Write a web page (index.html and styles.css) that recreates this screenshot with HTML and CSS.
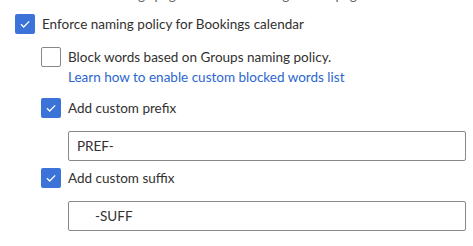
FILE: index.html
```html
<!DOCTYPE html>
<html lang="en">
<head>
  <meta charset="UTF-8" />
  <title>Naming policy</title>
  <link rel="stylesheet" href="styles.css">
</head>
<body>
  <div class="settings">
    <div class="top-clip">
      <p class="cut-line">Hide the Bookings page from the Bookings home page</p>
    </div>

    <label class="check-row first">
      <span class="box checked">
        <svg viewBox="0 0 20 20" width="20" height="20"><path d="M6 10.3l2.7 2.7 5.5-5.6" fill="none" stroke="#fff" stroke-width="1.3"/></svg>
      </span>
      <span class="check-label">Enforce naming policy for Bookings calendar</span>
    </label>

    <div class="nested">
      <label class="check-row top">
        <span class="box"></span>
        <span class="check-text">
          <span class="check-label">Block words based on Groups naming policy.</span>
          <a class="link" href="#">Learn how to enable custom blocked words list</a>
        </span>
      </label>

      <label class="check-row prefix">
        <span class="box checked">
          <svg viewBox="0 0 20 20" width="20" height="20"><path d="M6 10.3l2.7 2.7 5.5-5.6" fill="none" stroke="#fff" stroke-width="1.3"/></svg>
        </span>
        <span class="check-label">Add custom prefix</span>
      </label>
      <input class="text-field" type="text" value="PREF-">

      <label class="check-row">
        <span class="box checked">
          <svg viewBox="0 0 20 20" width="20" height="20"><path d="M6 10.3l2.7 2.7 5.5-5.6" fill="none" stroke="#fff" stroke-width="1.3"/></svg>
        </span>
        <span class="check-label">Add custom suffix</span>
      </label>
      <input class="text-field suffix" type="text" value="-SUFF">
    </div>
  </div>
</body>
</html>
```

FILE: styles.css
```css
body {
  margin: 0;
  background: #fff;
  font-family: 'Lato', sans-serif;
  font-size: 13.5px;
  line-height: 20px;
  color: #323130;
  overflow: hidden;
}

.settings {
  padding-left: 15px;
  padding-right: 7px;
}

.top-clip {
  height: 4px;
  overflow: hidden;
}

.cut-line {
  margin: -15px 0 0 27px;
  white-space: nowrap;
  color: #605e5c;
}

.check-row {
  display: flex;
  align-items: center;
  gap: 7px;
  margin-top: 7px;
}

.check-row.first {
  margin-top: 10px;
}

.nested .check-row.top {
  align-items: flex-start;
  margin-top: 13px;
}

.check-row.prefix {
  margin-top: 11px;
}

.check-text {
  display: flex;
  flex-direction: column;
}

.box {
  width: 18px;
  height: 18px;
  flex-shrink: 0;
  border: 1px solid #8a8886;
  border-radius: 2px;
  background: #fff;
}

.box.checked {
  width: 20px;
  height: 20px;
  border: none;
  background: #3b73d9;
}

.box svg {
  display: block;
}

.nested {
  padding-left: 26px;
}

.link {
  color: #2b66d0;
  text-decoration: none;
}

.text-field {
  display: block;
  box-sizing: border-box;
  width: calc(100% - 27px);
  height: 30px;
  margin: 13px 0 0 27px;
  padding: 0 8px;
  border: 1px solid #8a8886;
  border-radius: 2px;
  font-family: inherit;
  font-size: 13.5px;
  color: #323130;
}

.text-field.suffix {
  padding-left: 26px;
}
```
